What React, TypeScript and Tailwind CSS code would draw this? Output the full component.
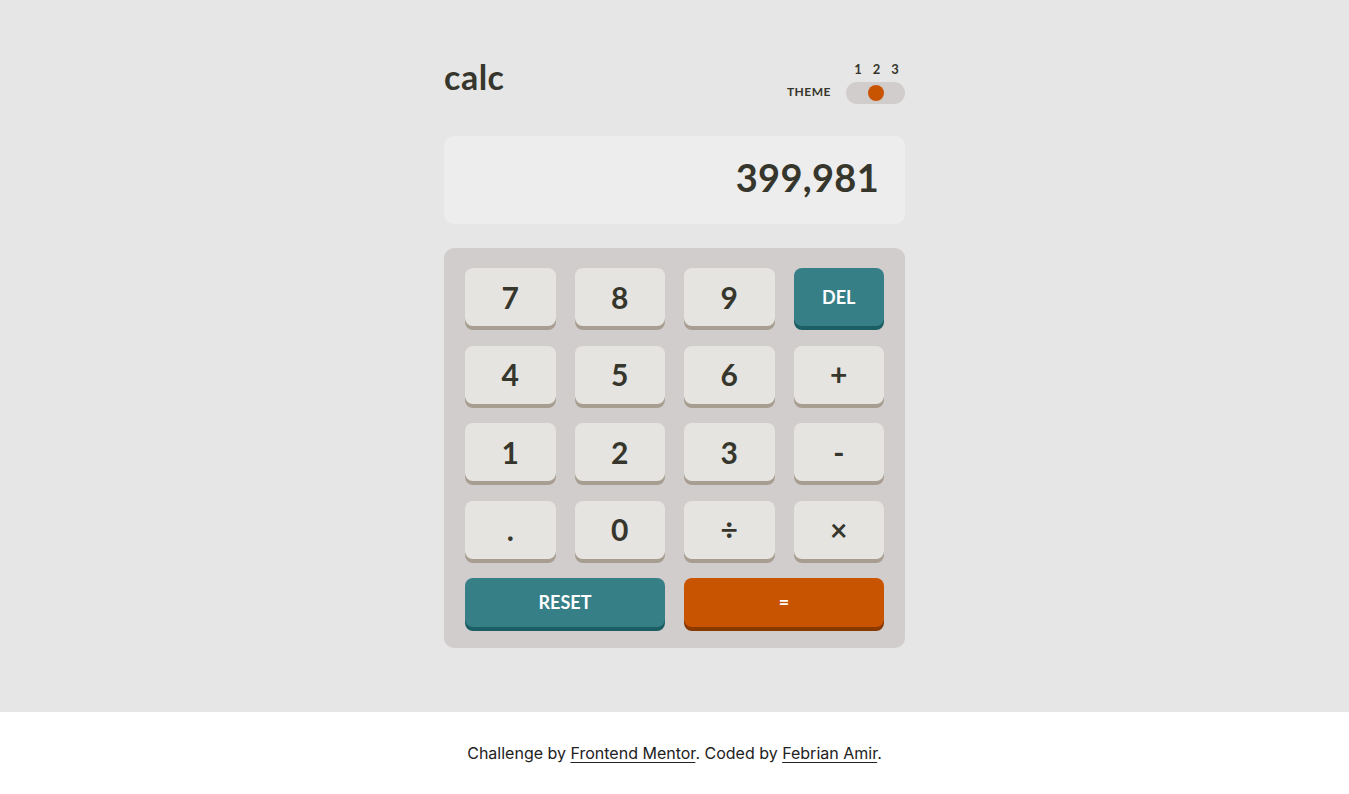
import { useState } from "react";

const keys = [
  "7", "8", "9", "DEL",
  "4", "5", "6", "+",
  "1", "2", "3", "-",
  ".", "0", "÷", "×",
];

const Key = ({ label }: { label: string }) => {
  const isDel = label === "DEL";
  return (
    <button
      className={`h-[58px] rounded-[8px] flex items-center justify-center ${
        isDel
          ? "bg-[#377f86] shadow-[0_4px_0_#1b5f65] text-white text-[18px]"
          : "bg-[#e5e4e0] shadow-[0_4px_0_#a79e91] text-[#36362c] text-[30px]"
      }`}
    >
      {label}
    </button>
  );
};

export default function App() {
  const [theme] = useState(2);

  return (
    <div className="min-h-screen flex flex-col font-['Lato',sans-serif] font-bold">
      <main className="h-[712px] bg-[#e6e6e6] flex items-center justify-center">
        <div className="w-[461px] flex flex-col mb-[2px]">
          <header className="flex items-end justify-between h-[42px]">
            <h1 className="text-[34px] leading-none text-[#36362c] tracking-[0.5px] mb-[10px]">calc</h1>
            <div className="flex items-end gap-[15px]">
              <span className="text-[12px] tracking-[0.5px] text-[#36362c] mb-[3px]">THEME</span>
              <div className="flex flex-col items-center w-[59px]">
                <div className="flex justify-center gap-[11px] text-[13px] text-[#36362c] leading-none mb-[6px] pl-[2px]">
                  <span>1</span>
                  <span>2</span>
                  <span>3</span>
                </div>
                <div className="w-[59px] h-[22px] rounded-full bg-[#d2cdcd] flex items-center justify-center">
                  <div
                    className={`w-[16px] h-[16px] rounded-full bg-[#c85402] ${
                      theme === 2 ? "ml-0" : ""
                    }`}
                  />
                </div>
              </div>
            </div>
          </header>

          <div className="mt-[32px] h-[88px] rounded-[10px] bg-[#ededed] flex items-center justify-end pr-[26px]">
            <span className="text-[38px] text-[#36362c] leading-none pb-[6px] tracking-[0.3px]">399,981</span>
          </div>

          <div className="mt-[24px] rounded-[10px] bg-[#d2cdcd] px-[21px] pt-[20px] pb-[21px]">
            <div className="grid grid-cols-4 gap-x-[19px] gap-y-[19.5px]">
              {keys.map((k) => (
                <Key key={k} label={k} />
              ))}
              <button className="col-span-2 h-[49px] rounded-[8px] bg-[#377f86] shadow-[0_4px_0_#1b5f65] text-white text-[18px] flex items-center justify-center">
                RESET
              </button>
              <button className="col-span-2 h-[49px] rounded-[8px] bg-[#c85402] shadow-[0_4px_0_#873901] text-white text-[18px] flex items-center justify-center">
                =
              </button>
            </div>
          </div>
        </div>
      </main>
      <footer className="h-[82px] bg-white flex items-center justify-center font-['Inter',sans-serif] font-normal text-[16px] text-[#222]">
        <p>
          Challenge by{" "}
          <a href="#" className="underline underline-offset-[3px]">Frontend Mentor</a>. Coded by{" "}
          <a href="#" className="underline underline-offset-[3px]">Febrian Amir</a>.
        </p>
      </footer>
    </div>
  );
}
